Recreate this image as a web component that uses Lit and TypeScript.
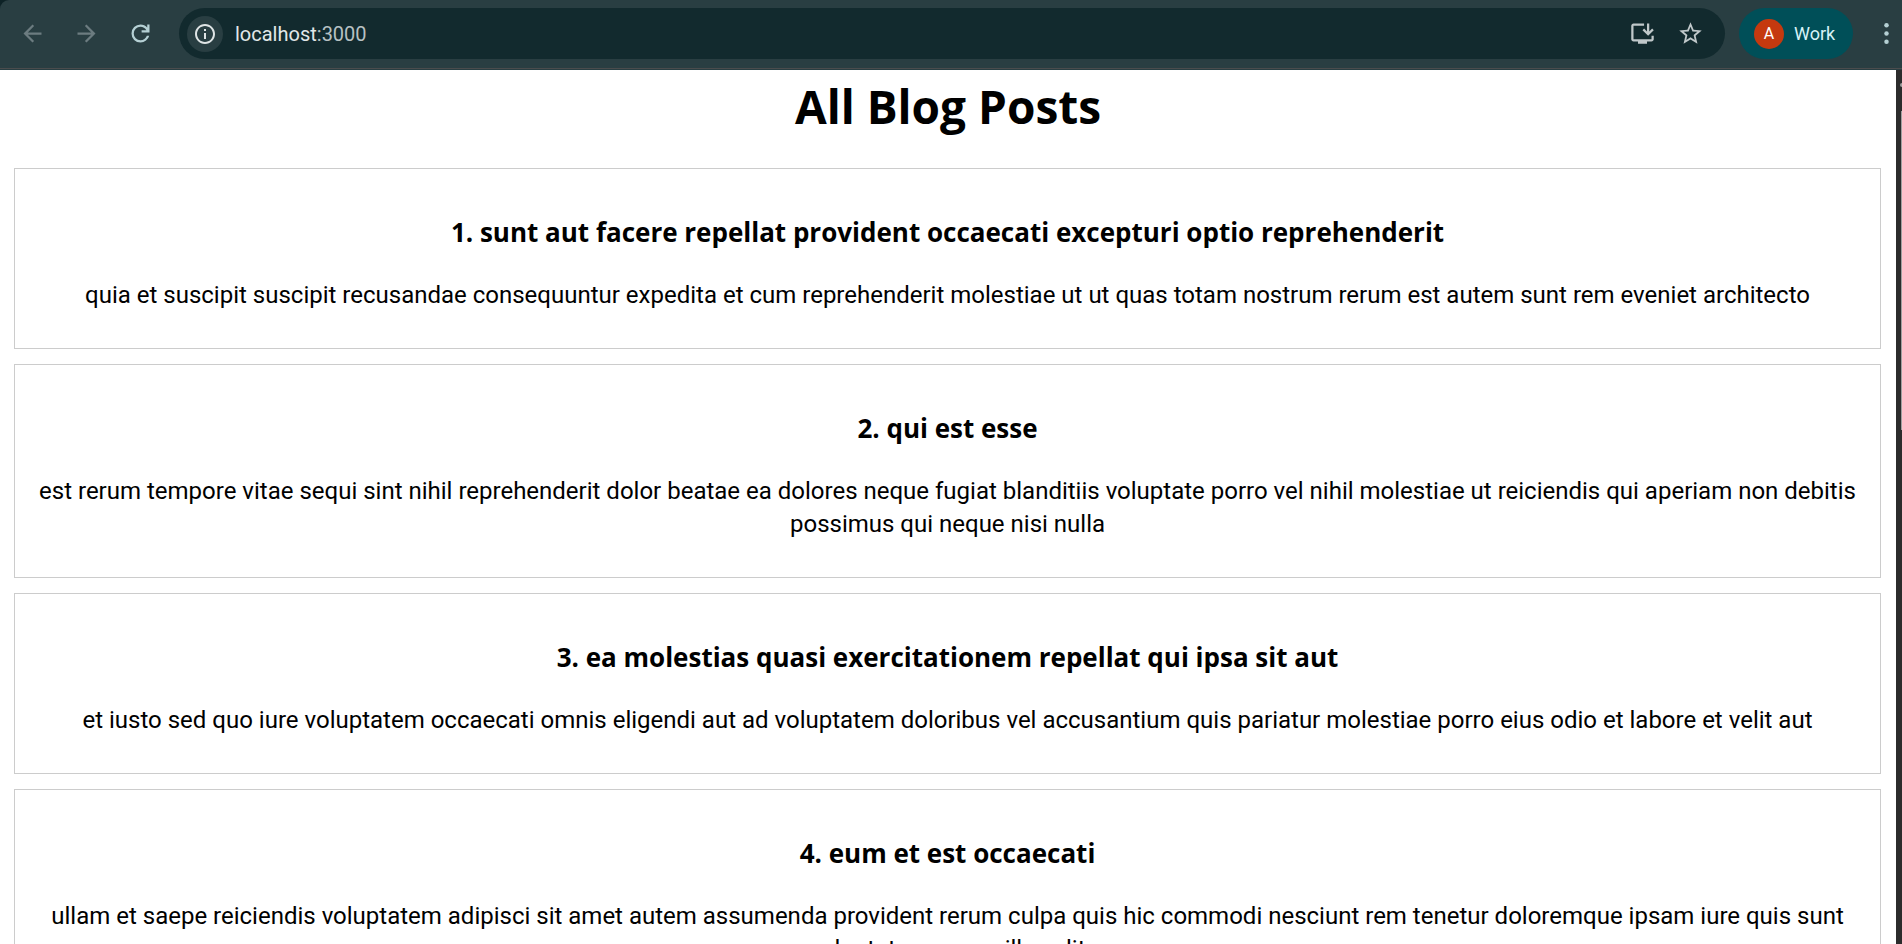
import { LitElement, html, css, svg } from "lit";
import { customElement } from "lit/decorators.js";

interface Post {
  id: number;
  title: string;
  body: string;
}

const POSTS: Post[] = [
  {
    id: 1,
    title: "sunt aut facere repellat provident occaecati excepturi optio reprehenderit",
    body: "quia et suscipit suscipit recusandae consequuntur expedita et cum reprehenderit molestiae ut ut quas totam nostrum rerum est autem sunt rem eveniet architecto",
  },
  {
    id: 2,
    title: "qui est esse",
    body: "est rerum tempore vitae sequi sint nihil reprehenderit dolor beatae ea dolores neque fugiat blanditiis voluptate porro vel nihil molestiae ut reiciendis qui aperiam non debitis possimus qui neque nisi nulla",
  },
  {
    id: 3,
    title: "ea molestias quasi exercitationem repellat qui ipsa sit aut",
    body: "et iusto sed quo iure voluptatem occaecati omnis eligendi aut ad voluptatem doloribus vel accusantium quis pariatur molestiae porro eius odio et labore et velit aut",
  },
  {
    id: 4,
    title: "eum et est occaecati",
    body: "ullam et saepe reiciendis voluptatem adipisci sit amet autem assumenda provident rerum culpa quis hic commodi nesciunt rem tenetur doloremque ipsam iure quis sunt voluptatem rerum illo velit",
  },
];

const ICONS = {
  back: svg`<path d="M20 11H7.83l5.59-5.59L12 4l-8 8 8 8 1.41-1.41L7.83 13H20z"/>`,
  forward: svg`<path d="M4 11h12.17l-5.59-5.59L12 4l8 8-8 8-1.41-1.41L16.17 13H4z"/>`,
  reload: svg`<path d="M12 20q-3.35 0-5.675-2.325T4 12t2.325-5.675T12 4q1.725 0 3.3.713T18 6.75V4h2v7h-7V9h4.2q-.8-1.4-2.187-2.2T12 6Q9.5 6 7.75 7.75T6 12t1.75 4.25T12 18q1.925 0 3.475-1.1T17.65 14h2.1q-.7 2.65-2.85 4.325T12 20Z"/>`,
  info: svg`<path d="M11 7h2v2h-2zm0 4h2v6h-2zm1-9C6.48 2 2 6.48 2 12s4.48 10 10 10 10-4.48 10-10S17.52 2 12 2zm0 18c-4.41 0-8-3.59-8-8s3.59-8 8-8 8 3.59 8 8-3.59 8-8 8z"/>`,
  install: svg`<path d="M20 17H4V5h9.400V3H4c-1.100 0-2 .9-2 2v12c0 1.100.9 2 2 2h4v2h8v-2h4c1.100 0 2-.9 2-2v-3h-2z"/><path d="M17 14l5-5-1.410-1.410L18 10.170V3h-2v7.170l-2.590-2.580L12 9z"/>`,
  star: svg`<path d="M22 9.240l-7.190-.62L12 2 9.190 8.630 2 9.240l5.460 4.730L5.820 21 12 17.270 18.180 21l-1.630-7.030zM12 15.400l-3.760 2.270 1-4.280-3.320-2.880 4.380-.38L12 6.100l1.710 4.040 4.380.38-3.320 2.880 1 4.280z"/>`,
  more: svg`<circle cx="12" cy="4.700" r="2"/><circle cx="12" cy="12" r="2"/><circle cx="12" cy="19.300" r="2"/>`,
};

const icon = (name: keyof typeof ICONS) =>
  html`<svg class="icon" viewBox="0 0 24 24" aria-hidden="true">${ICONS[name]}</svg>`;

@customElement("browser-bar")
export class BrowserBar extends LitElement {
  static styles = css`
    :host {
      display: block;
      flex: none;
      border-bottom: 1px solid #293e42;
      background: #0d2226;
      font-family: "Segoe UI", Roboto, sans-serif;
    }
    .bar {
      display: flex;
      align-items: center;
      height: 69px;
      box-sizing: border-box;
      padding: 0 2px 1px 12px;
      background: #293e42;
      border-bottom: 1px solid #4a4c4d;
      border-top-left-radius: 9px;
    }
    button {
      display: flex;
      align-items: center;
      justify-content: center;
      flex: none;
      width: 40px;
      height: 40px;
      padding: 0;
      border: 0;
      border-radius: 50%;
      background: none;
      color: #c0c8ca;
      font: inherit;
    }
    .icon {
      width: 27px;
      height: 27px;
      fill: currentColor;
    }
    .nav {
      display: flex;
      gap: 14px;
    }
    .nav button {
      color: #b5d0d4;
    }
    .nav button:disabled {
      color: #6c7c80;
    }
    .address {
      display: flex;
      align-items: center;
      flex: 1;
      height: 51px;
      box-sizing: border-box;
      margin: 0 14px 0 19px;
      padding: 0 15px 0 8px;
      border-radius: 26px;
      background: #122a2e;
    }
    .address .info {
      width: 36px;
      height: 36px;
      background: #293e42;
      color: #dfe4e5;
    }
    .info .icon {
      width: 24px;
      height: 24px;
    }
    .url {
      flex: 1;
      padding-left: 12px;
      color: #b7c1c3;
      font-size: 20px;
      line-height: 28px;
      text-decoration: none;
    }
    .host {
      color: #e1e7e8;
    }
    .actions {
      display: flex;
      gap: 8px;
    }
    .profile {
      justify-content: flex-start;
      width: 114px;
      height: 51px;
      gap: 10px;
      padding-left: 15px;
      border-radius: 26px;
      background: #004f58;
      color: #d6f3f7;
      font-size: 18px;
    }
    .avatar {
      width: 30px;
      border-radius: 50%;
      background: #c5390f;
      color: #ffffff;
      font-size: 16px;
      line-height: 30px;
      text-align: center;
    }
    .more {
      margin-left: 13px;
      margin-right: -6px;
      color: #b5d0d4;
    }
  `;

  render() {
    return html`
      <header class="bar">
        <nav class="nav">
          <button disabled aria-label="Back">${icon("back")}</button>
          <button disabled aria-label="Forward">${icon("forward")}</button>
          <button aria-label="Reload">${icon("reload")}</button>
        </nav>
        <div class="address">
          <button class="info" aria-label="Site information">${icon("info")}</button>
          <a class="url" href="#"><span class="host">localhost</span>:3000</a>
          <div class="actions">
            <button aria-label="Install app">${icon("install")}</button>
            <button aria-label="Bookmark">${icon("star")}</button>
          </div>
        </div>
        <button class="profile"><span class="avatar">A</span>Work</button>
        <button class="more" aria-label="Menu">${icon("more")}</button>
      </header>
    `;
  }
}

@customElement("blog-list")
export class BlogList extends LitElement {
  static styles = css`
    :host {
      display: block;
      flex: 1;
      min-width: 0;
      background: #ffffff;
      color: #000000;
      font-family: "Segoe UI", Roboto, sans-serif;
      font-size: 24px;
      line-height: 33px;
      text-align: center;
    }
    .heading,
    .title {
      font-family: "Segoe UI", "Open Sans", sans-serif;
    }
    .heading {
      margin: 0;
      padding: 4px 0 30px;
      font-size: 46px;
      line-height: 64px;
    }
    .posts {
      display: flex;
      flex-direction: column;
      gap: 15px;
      padding: 0 15px 0 14px;
    }
    .post {
      padding: 15px;
      border: 1px solid #cccccc;
    }
    .title {
      margin: 30px 0 28px;
      font-size: 26px;
      line-height: 37px;
    }
    .body {
      margin: 0 0 21px;
    }
  `;

  render() {
    return html`
      <h1 class="heading">All Blog Posts</h1>
      <div class="posts">
        ${POSTS.map(
          (post) => html`
            <article class="post">
              <h3 class="title">${post.id}. ${post.title}</h3>
              <p class="body">${post.body}</p>
            </article>
          `,
        )}
      </div>
    `;
  }
}

@customElement("app-root")
export class AppRoot extends LitElement {
  static styles = css`
    :host {
      display: flex;
      flex-direction: column;
      height: 100vh;
      overflow: hidden;
    }
    .viewport {
      display: flex;
      flex: 1;
      min-height: 0;
      overflow: hidden;
    }
    .scrollbar {
      display: flex;
      flex-direction: column;
      align-items: flex-end;
      flex: none;
      width: 6px;
      padding-top: 13px;
      background: #2c2c2c;
    }
    .arrow {
      width: 2px;
      height: 4px;
      border-radius: 2px 0 0 2px;
      background: #9f9f9f;
    }
    .thumb {
      width: 1px;
      height: 37%;
      margin-top: 24px;
      background: #9f9f9f;
    }
  `;

  render() {
    return html`
      <browser-bar></browser-bar>
      <main class="viewport">
        <blog-list></blog-list>
        <div class="scrollbar" aria-hidden="true">
          <div class="arrow"></div>
          <div class="thumb"></div>
        </div>
      </main>
    `;
  }
}
